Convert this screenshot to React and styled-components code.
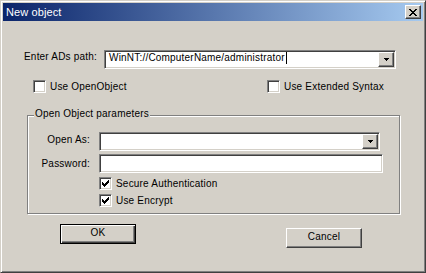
import styled, { createGlobalStyle } from "styled-components"

const GlobalStyle = createGlobalStyle`
  * { box-sizing: border-box; }
  body {
    margin: 0;
    background: #d4d0c8;
    font-family: "Liberation Sans", Arial, sans-serif;
    font-size: 10px;
    letter-spacing: 0.2px;
    color: #000;
  }
`

const Window = styled.div`
  width: 426px;
  height: 273px;
  background: #d4d0c8;
  border: 1px solid;
  border-color: #d4d0c8 #404040 #404040 #d4d0c8;
  box-shadow: inset 1px 1px #fff, inset -1px -1px #808080;
  padding: 2px;
  display: flex;
  flex-direction: column;
`

const TitleBar = styled.div`
  height: 18px;
  display: flex;
  align-items: center;
  justify-content: space-between;
  padding: 0 2px 0 3px;
  background: linear-gradient(to right, #0a246a, #a6caf0);
  color: #fff;
  font-size: 11px;
  letter-spacing: 0.1px;
`

const Raised = styled.div`
  background: #d4d0c8;
  border: 1px solid;
  border-color: #fff #404040 #404040 #fff;
  box-shadow: inset -1px -1px #808080;
  display: flex;
  align-items: center;
  justify-content: center;
`

const CloseButton = styled(Raised)`
  width: 16px;
  height: 14px;
`

const Body = styled.div`
  display: flex;
  flex-direction: column;
`

const PathRow = styled.div`
  display: flex;
  align-items: flex-start;
  margin: 29px 0 0 21px;
`

const Label = styled.span`
  width: ${p => p.$w || "auto"};
  line-height: 12px;
  padding-top: ${p => p.$top || "0px"};
  white-space: nowrap;
`

const Field = styled.div`
  width: ${p => p.$w};
  height: 19px;
  background: #fff;
  border: 1px solid;
  border-color: #808080 #fff #fff #808080;
  box-shadow: inset 1px 1px #404040, inset -1px -1px #d4d0c8;
  padding: 1px;
  display: flex;
  align-items: flex-start;
`

const FieldText = styled.span`
  flex: 1;
  line-height: 12px;
  padding-left: 3px;
  white-space: nowrap;
  display: flex;
  align-items: center;
`

const Caret = styled.span`
  width: 1px;
  height: 12px;
  margin-left: 1px;
  background: #000;
`

const DropButton = styled(Raised)`
  width: 16px;
  height: 15px;
`

const CheckRow = styled.div`
  display: grid;
  grid-template-columns: 234px auto;
  margin: 11px 0 0 30px;
`

const CheckItem = styled.label`
  display: flex;
  align-items: center;
  gap: 4px;
  line-height: 12px;
  white-space: nowrap;
`

const CheckBox = styled.span`
  width: 13px;
  height: 13px;
  background: #fff;
  border: 1px solid;
  border-color: #808080 #fff #fff #808080;
  box-shadow: inset 1px 1px #404040, inset -1px -1px #d4d0c8;
  display: flex;
  align-items: center;
  justify-content: center;
`

const Group = styled.div`
  width: 373px;
  height: 99px;
  margin: 22px 0 0 24px;
  border: 1px solid #808080;
  box-shadow: 1px 1px #fff, inset 1px 1px #fff;
  display: flex;
  flex-direction: column;
`

const Legend = styled.span`
  align-self: flex-start;
  margin: -9px 0 0 6px;
  padding: 0 1px;
  line-height: 14px;
  background: #d4d0c8;
`

const FieldGrid = styled.div`
  display: grid;
  grid-template-columns: 62px auto;
  column-gap: 9px;
  row-gap: 3px;
  align-items: center;
  margin-top: 11px;
`

const RightLabel = styled.span`
  text-align: right;
  line-height: 12px;
  white-space: nowrap;
  margin-top: ${p => p.$shift || "0px"};
`

const CheckStack = styled.div`
  grid-column: 2;
  display: flex;
  flex-direction: column;
  gap: 4px;
  margin-top: 1px;
`

const ButtonRow = styled.div`
  display: flex;
  align-items: flex-start;
  margin-top: 10px;
`

const Button = styled.div`
  width: 76px;
  height: 20px;
  margin: ${p => p.$m};
  background: #d4d0c8;
  border: 1px solid;
  border-color: ${p => (p.$default ? "#000" : "#fff #404040 #404040 #fff")};
  box-shadow: ${p =>
    p.$default
      ? "inset 1px 1px #fff, inset -1px -1px #404040, inset -2px -2px #808080"
      : "inset -1px -1px #808080"};
  display: flex;
  align-items: center;
  justify-content: center;
  padding-bottom: 3px;
  line-height: 12px;
`

const pix = (rows) =>
  rows.flatMap((r, y) =>
    r.split("").map((c, x) => (c === "X" ? <rect key={x + "-" + y} x={x} y={y} width="1" height="1" /> : null))
  )

const Glyph = ({ rows }) => (
  <svg width={rows[0].length} height={rows.length} viewBox={`0 0 ${rows[0].length} ${rows.length}`} shapeRendering="crispEdges" fill="#000">
    {pix(rows)}
  </svg>
)

const closeRows = ["XX....XX", ".XX..XX.", "..XXXX..", "...XX...", "..XXXX..", ".XX..XX.", "XX....XX"]
const arrowRows = ["XXXXX", ".XXX.", "..X.."]
const checkRows = ["......X", ".....XX", "X...XXX", "XX.XXX.", "XXXXX..", ".XXX...", "..X...."]

const Check = ({ checked, children }) => (
  <CheckItem>
    <CheckBox>{checked && <Glyph rows={checkRows} />}</CheckBox>
    {children}
  </CheckItem>
)

const App = () => {
  return (
    <>
      <GlobalStyle />
      <Window>
        <TitleBar>
          <span>New object</span>
          <CloseButton>
            <Glyph rows={closeRows} />
          </CloseButton>
        </TitleBar>
        <Body>
          <PathRow>
            <Label $w="80px" $top="1px">Enter ADs path:</Label>
            <Field $w="292px">
              <FieldText>
                WinNT://ComputerName/administrator
                <Caret />
              </FieldText>
              <DropButton>
                <Glyph rows={arrowRows} />
              </DropButton>
            </Field>
          </PathRow>
          <CheckRow>
            <Check>Use OpenObject</Check>
            <Check>Use Extended Syntax</Check>
          </CheckRow>
          <Group>
            <Legend>Open Object parameters</Legend>
            <FieldGrid>
              <RightLabel $shift="-4px">Open As:</RightLabel>
              <Field $w="281px">
                <FieldText />
                <DropButton>
                  <Glyph rows={arrowRows} />
                </DropButton>
              </Field>
              <RightLabel>Password:</RightLabel>
              <Field $w="284px" />
              <CheckStack>
                <Check checked>Secure Authentication</Check>
                <Check checked>Use Encrypt</Check>
              </CheckStack>
            </FieldGrid>
          </Group>
          <ButtonRow>
            <Button $default $m="0 0 0 57px">OK</Button>
            <Button $m="4px 0 0 150px">Cancel</Button>
          </ButtonRow>
        </Body>
      </Window>
    </>
  )
}

export default App
